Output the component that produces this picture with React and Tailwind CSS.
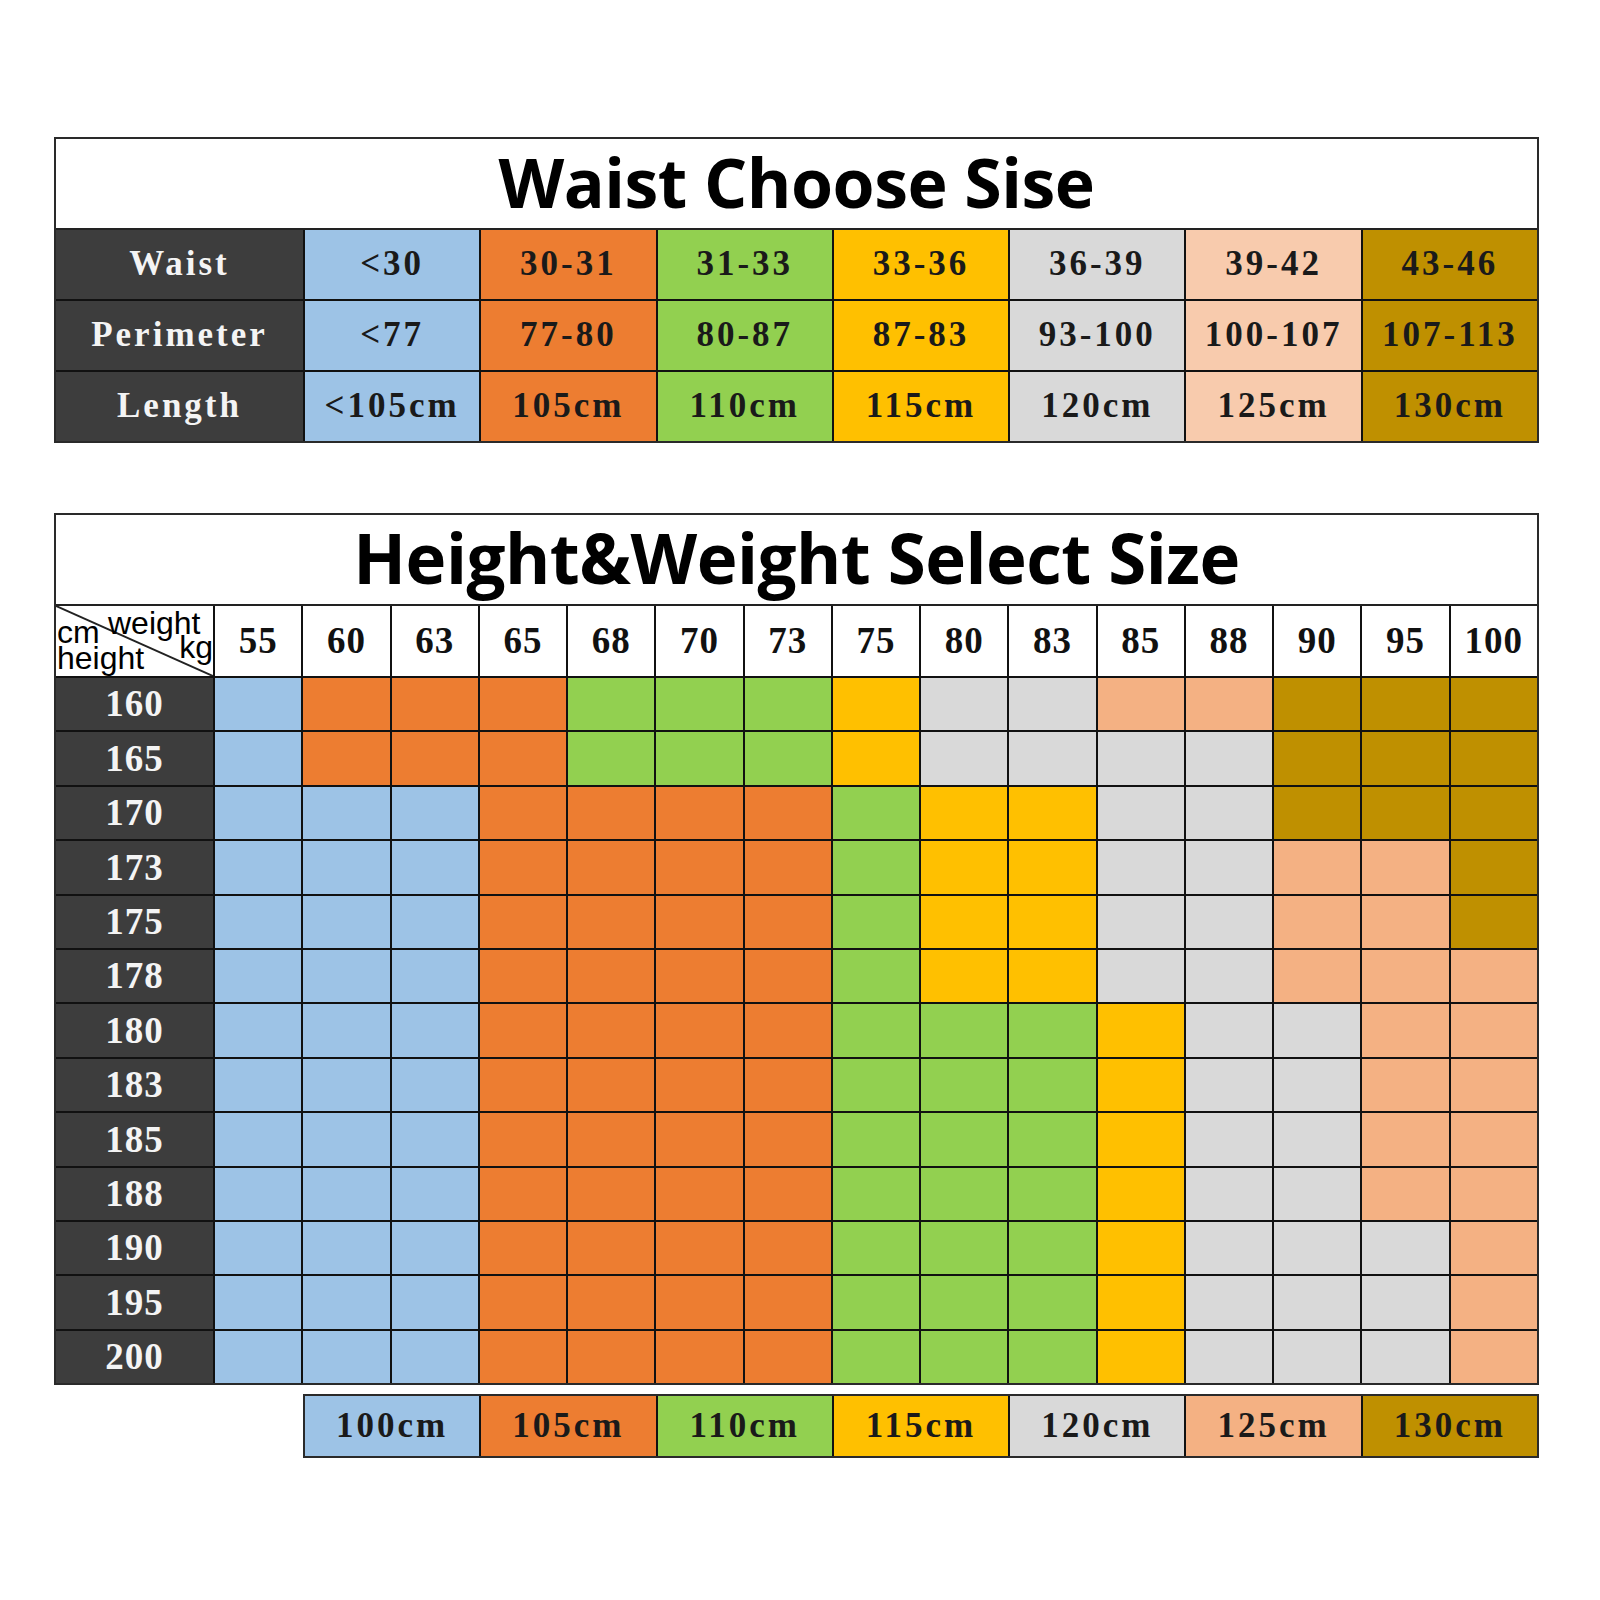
const COLORS = {
  B: 'bg-[#9dc3e6]',
  O: 'bg-[#ed7d31]',
  G: 'bg-[#92d050]',
  Y: 'bg-[#ffc000]',
  L: 'bg-[#d9d9d9]',
  P: 'bg-[#f4b183]',
  Q: 'bg-[#f8cbad]',
  D: 'bg-[#bf9000]',
};

// waist table columns
const waistCols = [
  { c: 'B', w: '<30', p: '<77', l: '<105cm' },
  { c: 'O', w: '30-31', p: '77-80', l: '105cm' },
  { c: 'G', w: '31-33', p: '80-87', l: '110cm' },
  { c: 'Y', w: '33-36', p: '87-83', l: '115cm' },
  { c: 'L', w: '36-39', p: '93-100', l: '120cm' },
  { c: 'Q', w: '39-42', p: '100-107', l: '125cm' },
  { c: 'D', w: '43-46', p: '107-113', l: '130cm' },
];

const weights = ['55', '60', '63', '65', '68', '70', '73', '75', '80', '83', '85', '88', '90', '95', '100'];

const heights = [
  ['160', 'BOOOGGGYLLPPDDD'],
  ['165', 'BOOOGGGYLLLLDDD'],
  ['170', 'BBBOOOOGYYLLDDD'],
  ['173', 'BBBOOOOGYYLLPPD'],
  ['175', 'BBBOOOOGYYLLPPD'],
  ['178', 'BBBOOOOGYYLLPPP'],
  ['180', 'BBBOOOOGGGYLLPP'],
  ['183', 'BBBOOOOGGGYLLPP'],
  ['185', 'BBBOOOOGGGYLLPP'],
  ['188', 'BBBOOOOGGGYLLPP'],
  ['190', 'BBBOOOOGGGYLLLP'],
  ['195', 'BBBOOOOGGGYLLLP'],
  ['200', 'BBBOOOOGGGYLLLP'],
];

const legend = [
  ['B', '100cm'],
  ['O', '105cm'],
  ['G', '110cm'],
  ['Y', '115cm'],
  ['L', '120cm'],
  ['P', '125cm'],
  ['D', '130cm'],
];

const serif = "font-['Liberation_Serif',serif] font-bold";

function Title({ children, size }) {
  return (
    <div className="h-[91px] pb-[4px] flex items-center justify-center bg-white border-b-2 border-[#222]">
      <h1 className={`font-['Open_Sans',sans-serif] font-bold ${size} leading-none text-black tracking-[-0.5px]`}>
        {children}
      </h1>
    </div>
  );
}

function WaistTable() {
  const rows = [
    ['Waist', 'w'],
    ['Perimeter', 'p'],
    ['Length', 'l'],
  ];
  return (
    <div className="ml-[54px] mt-[137px] w-[1485px] border-2 border-[#2a2a2a]">
      <Title size="text-[68px]">Waist Choose Sise</Title>
      <div className={`grid grid-cols-[247px_repeat(7,1fr)] gap-[2px] bg-[#111] ${serif} text-[35px] tracking-[3px]`}>
        {rows.map(([label, key]) => (
          <div key={label} className="contents">
            <div className="h-[69px] flex items-center justify-center bg-[#3d3d3d] text-[#f4f4f4]">{label}</div>
            {waistCols.map((col) => (
              <div key={col.w} className={`h-[69px] flex items-center justify-center text-[#1a1a1a] ${COLORS[col.c]}`}>
                {col[key]}
              </div>
            ))}
          </div>
        ))}
      </div>
    </div>
  );
}

function CornerCell() {
  return (
    <div className="relative h-[70px] bg-white overflow-hidden font-['Liberation_Sans',sans-serif] font-normal text-[32px] leading-none tracking-normal text-black">
      <svg className="absolute inset-0" width="100%" height="100%" viewBox="0 0 157 70" preserveAspectRatio="none">
        <line x1="0" y1="0" x2="157" y2="70" stroke="#222" strokeWidth="2" />
      </svg>
      <span className="absolute left-[1px] top-[10px]">cm</span>
      <span className="absolute left-[52px] top-[1px]">weight</span>
      <span className="absolute right-0 top-[25px]">kg</span>
      <span className="absolute left-[1px] top-[36px]">height</span>
    </div>
  );
}

function SizeTable() {
  return (
    <div className="ml-[54px] mt-[70px] w-[1485px] border-2 border-[#2a2a2a]">
      <Title size="text-[69px]">Height&amp;Weight Select Size</Title>
      <div className={`grid grid-cols-[157px_repeat(15,1fr)] gap-[2px] bg-[#111] ${serif} text-[37px] tracking-[1px]`}>
        <CornerCell />
        {weights.map((w) => (
          <div key={w} className="h-[70px] flex items-center justify-center bg-white text-[#111]">{w}</div>
        ))}
        {heights.map(([h, pattern]) => (
          <div key={h} className="contents">
            <div className="h-[52.4px] flex items-center justify-center bg-[#3d3d3d] text-[#f4f4f4]">{h}</div>
            {pattern.split('').map((c, i) => (
              <div key={i} className={`h-[52.4px] ${COLORS[c]}`} />
            ))}
          </div>
        ))}
      </div>
    </div>
  );
}

function Legend() {
  return (
    <div className={`ml-[303px] mt-[9px] w-[1236px] border-2 border-[#2a2a2a] grid grid-cols-7 gap-[2px] bg-[#111] ${serif} text-[35px] tracking-[3px]`}>
      {legend.map(([c, t]) => (
        <div key={t} className={`h-[60px] flex items-center justify-center text-[#1a1a1a] ${COLORS[c]}`}>{t}</div>
      ))}
    </div>
  );
}

export default function App() {
  return (
    <div className="w-[1600px] h-[1600px] bg-white overflow-hidden">
      <WaistTable />
      <SizeTable />
      <Legend />
    </div>
  );
}
